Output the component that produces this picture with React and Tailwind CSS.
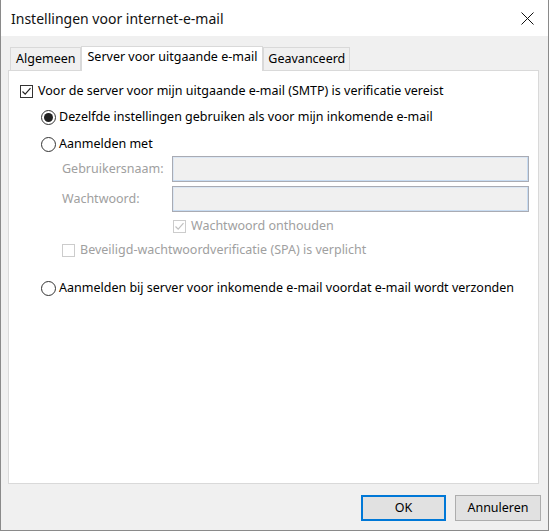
import React from 'react';

const font = { fontFamily: '"Noto Sans", "Open Sans", sans-serif' };

function Check({ checked, disabled }) {
  const border = disabled ? 'border-[#cccccc]' : 'border-[#333333]';
  return (
    <span className={`w-[13px] h-[13px] shrink-0 border ${border} bg-white flex items-center justify-center`}>
      {checked && (
        <svg width="11" height="11" viewBox="0 0 11 11">
          <path d="M1.5 5.5 L4.2 8.2 L9.5 2.2" fill="none" stroke={disabled ? '#c0c0c0' : '#222'} strokeWidth="1.2" />
        </svg>
      )}
    </span>
  );
}

function Radio({ checked }) {
  return (
    <span className="w-[15px] h-[15px] shrink-0 rounded-full border border-[#333333] bg-white flex items-center justify-center">
      {checked && <span className="w-[9px] h-[9px] rounded-full bg-[#222222]" />}
    </span>
  );
}

function TextBox() {
  return <div className="flex-1 h-[26px] bg-[#f0f0f0] border border-[#a9abb3] shadow-[inset_-1px_-1px_0_#c8dcf2,inset_1px_1px_0_#dce7f4]" />;
}

export default function App() {
  return (
    <div style={font} className="w-[549px] h-[531px] flex flex-col border-x border-b border-[#8a8a8a] text-[12.5px] text-[#000] bg-[#f0f0f0] overflow-hidden">
      <div className="h-[36px] bg-white flex items-center justify-between pl-[10px] pr-[14px] shrink-0">
        <span className="text-[14px] text-[#111]">Instellingen voor internet-e-mail</span>
        <svg width="13" height="13" viewBox="0 0 13 13">
          <path d="M0.5 0.5 L12.5 12.5 M12.5 0.5 L0.5 12.5" stroke="#111" strokeWidth="1" />
        </svg>
      </div>

      <div className="flex-1 flex flex-col pl-[7px] pr-[9px] pt-[9px]">
        <div className="flex items-end h-[25px] pl-[2px] relative z-10">
          <div className="h-[23px] px-[5px] flex items-center border border-b-0 border-[#d9d9d9] bg-[#f0f0f0]">Algemeen</div>
          <div className="h-[25px] px-[5px] flex items-center border border-b-0 border-[#d9d9d9] bg-white -mb-px pb-[3px]">Server voor uitgaande e-mail</div>
          <div className="h-[23px] px-[4px] flex items-center border border-b-0 border-[#d9d9d9] bg-[#f0f0f0]">Geavanceerd</div>
        </div>

        <div className="h-[414px] bg-white border border-[#d9d9d9] pt-[10px] flex flex-col">
          <div className="h-[20px] flex items-center pl-[11px] gap-[5px]">
            <Check checked />
            <span>Voor de server voor mijn uitgaande e-mail (SMTP) is verificatie vereist</span>
          </div>
          <div className="h-[20px] mt-[6px] flex items-center pl-[32px] gap-[3px]">
            <Radio checked />
            <span>Dezelfde instellingen gebruiken als voor mijn inkomende e-mail</span>
          </div>
          <div className="h-[20px] mt-[7px] flex items-center pl-[32px] gap-[3px]">
            <Radio />
            <span>Aanmelden met</span>
          </div>
          <div className="h-[26px] mt-[2px] flex items-center pl-[53px] pr-[9px]">
            <span className="w-[110px] text-[#a0a0a0]">Gebruikersnaam:</span>
            <TextBox />
          </div>
          <div className="h-[26px] mt-[4px] flex items-center pl-[53px] pr-[9px]">
            <span className="w-[110px] text-[#a0a0a0]">Wachtwoord:</span>
            <TextBox />
          </div>
          <div className="h-[20px] mt-[4px] flex items-center pl-[164px] gap-[5px]">
            <Check checked disabled />
            <span className="text-[#a0a0a0]">Wachtwoord onthouden</span>
          </div>
          <div className="h-[20px] mt-[4px] flex items-center pl-[53px] gap-[5px]">
            <Check disabled />
            <span className="text-[#a0a0a0]">Beveiligd-wachtwoordverificatie (SPA) is verplicht</span>
          </div>
          <div className="h-[20px] mt-[18px] flex items-center pl-[32px] gap-[3px]">
            <Radio />
            <span>Aanmelden bij server voor inkomende e-mail voordat e-mail wordt verzonden</span>
          </div>
        </div>

        <div className="flex justify-end gap-[9px] mt-[11px] -mr-[2px]">
          <button className="w-[85px] h-[26px] bg-[#e1e1e1] border-2 border-[#0078d7] flex items-center justify-center">OK</button>
          <button className="w-[86px] h-[26px] bg-[#e1e1e1] border border-[#adadad] flex items-center justify-center">Annuleren</button>
        </div>
      </div>
    </div>
  );
}
